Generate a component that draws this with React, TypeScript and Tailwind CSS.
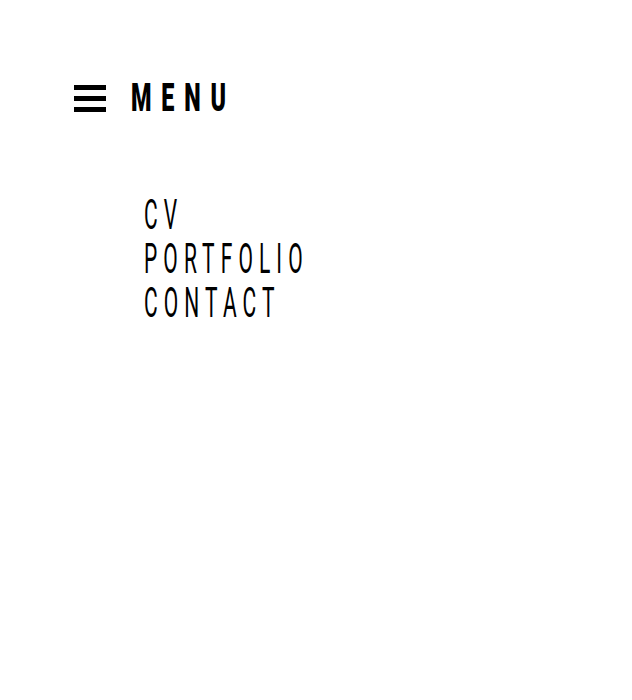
export default function App() {
  const links = ["CV", "PORTFOLIO", "CONTACT"];

  return (
    <div className="min-h-screen bg-white pl-[74px] pt-[79px] font-['Roboto',sans-serif] text-black">
      {/* Header */}
      <div className="flex h-[39px] items-center">
        <svg width="32" height="27" viewBox="0 0 32 27" className="shrink-0">
          <rect x="0" y="0" width="32" height="5" fill="black" />
          <rect x="0" y="11" width="32" height="5" fill="black" />
          <rect x="0" y="22" width="32" height="5" fill="black" />
        </svg>
        <span className="ml-[25px] inline-block origin-left scale-x-[0.6] whitespace-nowrap text-[39px] font-black leading-none tracking-[0.42em]">
          MENU
        </span>
      </div>

      {/* Links */}
      <nav className="ml-[70px] mt-[75px] flex flex-col">
        {links.map((link) => (
          <a
            key={link}
            href="#"
            className="inline-block origin-left scale-x-[0.5] whitespace-nowrap text-[42px] font-normal leading-[44px] tracking-[0.29em]"
          >
            {link}
          </a>
        ))}
      </nav>
    </div>
  );
}
